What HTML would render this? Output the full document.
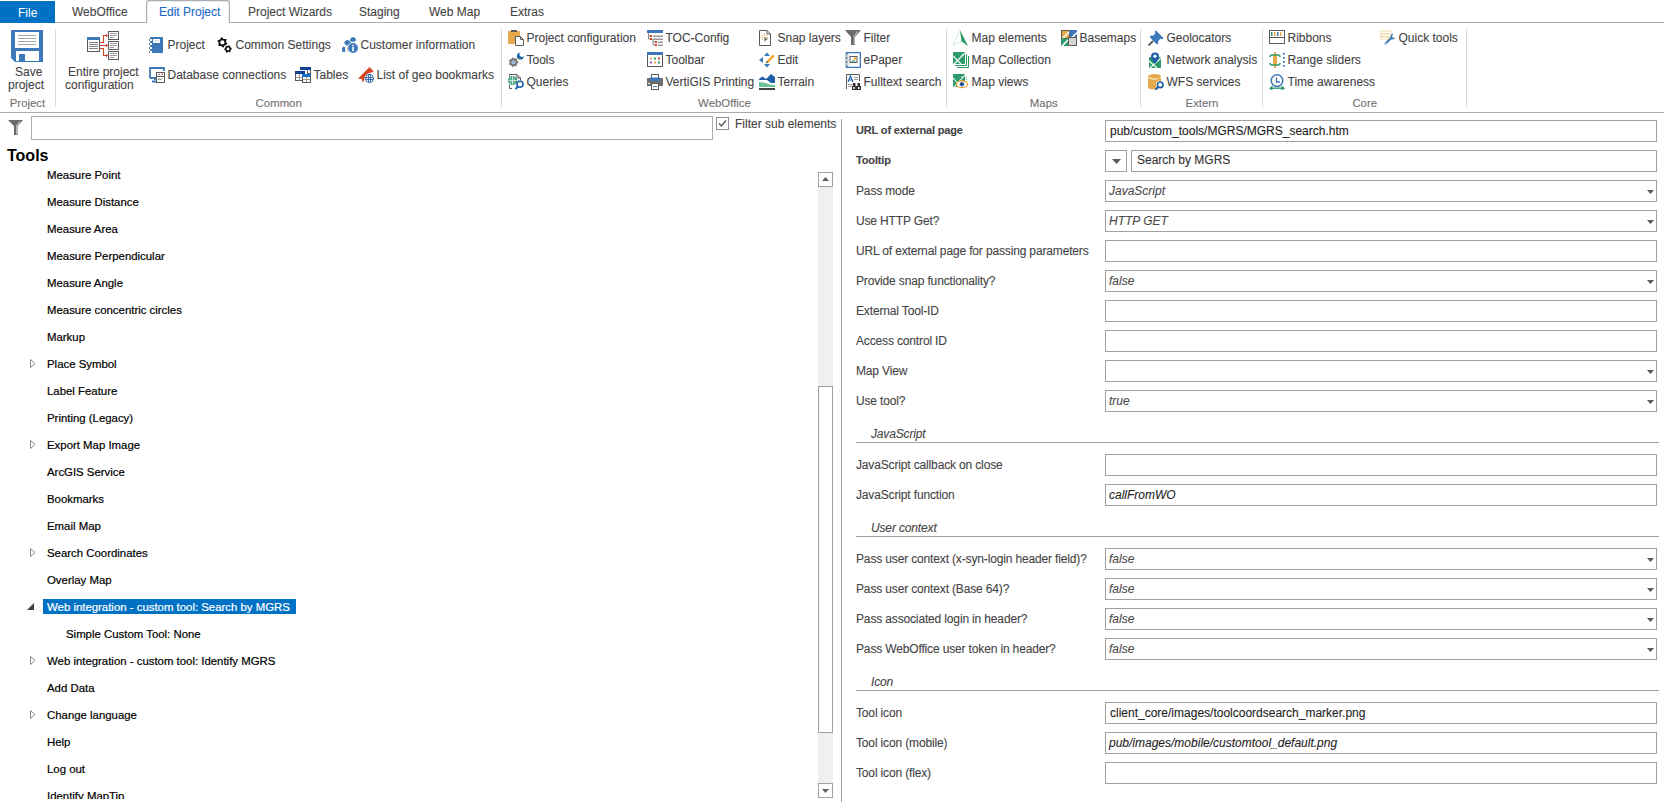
<!DOCTYPE html>
<html><head><meta charset="utf-8"><style>
html,body{margin:0;padding:0;background:#fff;}
body{width:1664px;height:810px;position:relative;overflow:hidden;font-family:"Liberation Sans",sans-serif;font-size:12px;}
.t{position:absolute;white-space:nowrap;line-height:15px;color:#444;}
.rb{color:#444;-webkit-text-stroke-width:0.1px;}
.tr{color:#000;font-size:11.4px;-webkit-text-stroke-width:0.2px;}
.pl{color:#444;letter-spacing:-0.15px;-webkit-text-stroke-width:0.1px;}
.pv{color:#1e1e1e;-webkit-text-stroke-width:0.1px;}
svg{display:block}
</style></head><body>
<div style="position:absolute;left:0px;top:1px;width:55px;height:22px;background:#0072c6"></div>
<div class="t " style="left:18px;top:6px;color:#fff">File</div>
<div style="position:absolute;left:55px;top:22px;width:1609px;height:1px;background:#ababab"></div>
<div style="position:absolute;left:146px;top:0;width:84px;height:23px;border:1px solid #ababab;border-bottom:none;border-radius:3px 3px 0 0;background:#fff;box-sizing:border-box;box-shadow:inset 1px 1px 0 #e4f1fb,inset -1px 0 0 #e4f1fb"></div>
<div class="t rb" style="left:72px;top:5px;">WebOffice</div>
<div class="t rb" style="left:248px;top:5px;">Project Wizards</div>
<div class="t rb" style="left:359px;top:5px;">Staging</div>
<div class="t rb" style="left:429px;top:5px;">Web Map</div>
<div class="t rb" style="left:510px;top:5px;">Extras</div>
<div class="t rb" style="left:159px;top:5px;color:#1a6ac8">Edit Project</div>
<div style="position:absolute;left:0px;top:112px;width:1664px;height:1px;background:#ababab"></div>
<div style="position:absolute;left:55px;top:29px;width:1px;height:78px;background:#dadada"></div>
<div style="position:absolute;left:501px;top:29px;width:1px;height:78px;background:#dadada"></div>
<div style="position:absolute;left:946px;top:29px;width:1px;height:78px;background:#dadada"></div>
<div style="position:absolute;left:1140px;top:29px;width:1px;height:78px;background:#dadada"></div>
<div style="position:absolute;left:1262px;top:29px;width:1px;height:78px;background:#dadada"></div>
<div style="position:absolute;left:1466px;top:29px;width:1px;height:78px;background:#dadada"></div>
<div class="t rb" style="left:-22.5px;width:100px;text-align:center;top:96px;font-size:11.4px;color:#707070">Project</div>
<div class="t rb" style="left:228.7px;width:100px;text-align:center;top:96px;font-size:11.4px;color:#707070">Common</div>
<div class="t rb" style="left:674.5px;width:100px;text-align:center;top:96px;font-size:11.4px;color:#707070">WebOffice</div>
<div class="t rb" style="left:993.75px;width:100px;text-align:center;top:96px;font-size:11.4px;color:#707070">Maps</div>
<div class="t rb" style="left:1152px;width:100px;text-align:center;top:96px;font-size:11.4px;color:#707070">Extern</div>
<div class="t rb" style="left:1314.75px;width:100px;text-align:center;top:96px;font-size:11.4px;color:#707070">Core</div>
<div style="position:absolute;left:11px;top:30px"><svg width="32" height="32" viewBox="0 0 32 32" shape-rendering="geometricPrecision"><path d="M0 0H32V32H4L0 28Z" fill="#3d78b8"/><rect x="4" y="2" width="24" height="16" fill="#fff"/><rect x="7" y="5" width="18" height="1" fill="#a8a8a8"/><rect x="7" y="8" width="18" height="1" fill="#a8a8a8"/><rect x="7" y="11" width="18" height="1" fill="#a8a8a8"/><rect x="7" y="14" width="18" height="1" fill="#a8a8a8"/><rect x="5" y="21" width="23" height="10" fill="#fff"/><rect x="8" y="24" width="6" height="8" fill="#3d78b8"/></svg></div>
<div class="t rb" style="left:15px;top:65px;">Save</div>
<div class="t rb" style="left:8px;top:78px;">project</div>
<div style="position:absolute;left:87px;top:31px"><svg width="32" height="30" viewBox="0 0 32 30" shape-rendering="geometricPrecision"><rect x="0.5" y="6.5" width="12" height="14" fill="#fff" stroke="#5a5a5a"/><rect x="0" y="6" width="13" height="3" fill="#3d78b8"/><rect x="2" y="11" width="9" height="1" fill="#888"/><rect x="2" y="13" width="9" height="1" fill="#888"/><rect x="2" y="15" width="9" height="1" fill="#888"/><rect x="2" y="17" width="9" height="1" fill="#888"/><path d="M13 11.5H16.5V4.5H20.5M13 14.5H20.5M13 17.5H16.5V24.5H20.5" fill="none" stroke="#d24726" stroke-width="1.1"/><path d="M19.5 3L21 4.5L19.5 6L18 4.5ZM19.5 13L21 14.5L19.5 16L18 14.5ZM19.5 23L21 24.5L19.5 26L18 24.5Z" fill="#d24726"/><rect x="21.5" y="0.5" width="10" height="8" fill="#fff" stroke="#5a5a5a"/><rect x="23" y="2" width="7" height="1" fill="#999"/><rect x="23" y="4" width="7" height="1" fill="#999"/><rect x="23" y="6" width="4" height="1" fill="#999"/><rect x="21.5" y="10.5" width="10" height="8" fill="#fff" stroke="#5a5a5a"/><rect x="23" y="12" width="7" height="1" fill="#999"/><rect x="23" y="14" width="7" height="1" fill="#999"/><rect x="23" y="16" width="4" height="1" fill="#999"/><rect x="21.5" y="20.5" width="10" height="8" fill="#fff" stroke="#5a5a5a"/><rect x="23" y="22" width="7" height="1" fill="#999"/><rect x="23" y="24" width="7" height="1" fill="#999"/><rect x="23" y="26" width="4" height="1" fill="#999"/></svg></div>
<div class="t rb" style="left:68px;top:65px;">Entire project</div>
<div class="t rb" style="left:65px;top:78px;">configuration</div>
<div style="position:absolute;left:149px;top:37px;width:16px;height:16px"><svg width="16" height="16" viewBox="0 0 16 16" shape-rendering="geometricPrecision"><rect x="1" y="0" width="13" height="16" fill="#3d78b8"/><rect x="4" y="2" width="7" height="4" fill="#fff"/><rect x="5" y="3" width="5" height="2" fill="#dde8f3"/><rect x="0" y="2" width="3" height="2" fill="#fff"/><rect x="0" y="2" width="1" height="2" fill="#777"/><rect x="0" y="6" width="3" height="2" fill="#fff"/><rect x="0" y="6" width="1" height="2" fill="#777"/><rect x="0" y="10" width="3" height="2" fill="#fff"/><rect x="0" y="10" width="1" height="2" fill="#777"/><rect x="0" y="14" width="3" height="2" fill="#fff"/><rect x="0" y="14" width="1" height="2" fill="#777"/></svg></div>
<div class="t rb" style="left:167.5px;top:38px;">Project</div>
<div style="position:absolute;left:217px;top:37px;width:16px;height:16px"><svg width="16" height="16" viewBox="0 0 16 16" shape-rendering="geometricPrecision"><polygon points="4.46,0.08 6.67,1.92 9.54,1.93 9.04,4.76 10.47,7.25 7.78,8.23 6.34,10.72 4.13,8.88 1.26,8.87 1.76,6.04 0.33,3.55 3.02,2.57" fill="#111"/><circle cx="5.4" cy="5.4" r="3.4000000000000004" fill="#111"/><circle cx="5.4" cy="5.4" r="2.1" fill="#fff"/><polygon points="12.69,8.37 13.38,10.34 14.98,11.65 13.63,13.23 13.29,15.28 11.25,14.89 9.31,15.63 8.62,13.66 7.02,12.35 8.37,10.77 8.71,8.72 10.75,9.11" fill="#111"/><circle cx="11" cy="12" r="2.6" fill="#111"/><circle cx="11" cy="12" r="1.4" fill="#fff"/></svg></div>
<div class="t rb" style="left:235.5px;top:38px;">Common Settings</div>
<div style="position:absolute;left:342px;top:37px;width:16px;height:16px"><svg width="16" height="16" viewBox="0 0 16 16" shape-rendering="geometricPrecision"><path d="M8.5 1.5Q9.5 0 11 0Q12.5 0 13.5 1.5L14 3.5L12.5 4.7H9.5L8 3.5Z" fill="#3d78b8"/><path d="M2 5.5L4.5 3L7 3.5L9.5 6L7 8.6L4 8.5Z" fill="#3d78b8"/><path d="M0 11L1.5 9.6L3.2 10.2V15H0.3Z" fill="#3d78b8"/><circle cx="11" cy="11" r="5.8" fill="#fff"/><circle cx="11" cy="11" r="4.9" fill="#3d78b8"/><rect x="10.2" y="7.8" width="1.6" height="1.4" fill="#fff"/><rect x="10.2" y="10" width="1.6" height="4.2" fill="#fff"/><rect x="5" y="10" width="0.8" height="5" fill="#c8b8a8"/></svg></div>
<div class="t rb" style="left:360.5px;top:38px;">Customer information</div>
<div style="position:absolute;left:149px;top:67px;width:16px;height:16px"><svg width="16" height="16" viewBox="0 0 16 16" shape-rendering="geometricPrecision"><path d="M1 11V1H15V4" fill="none" stroke="#3d78b8" stroke-width="1.8"/><path d="M1 11H6V13" fill="none" stroke="#3d78b8" stroke-width="1.8"/><rect x="3" y="13.5" width="4" height="2" fill="#3d78b8"/><rect x="7.5" y="5.5" width="8" height="10" fill="#fff" stroke="#5a5a5a"/><rect x="7.5" y="9" width="8" height="1" fill="#5a5a5a"/><rect x="9" y="7" width="2" height="1" fill="#888"/><rect x="12.5" y="6.7" width="1.4" height="1.4" fill="#d24726"/><path d="M9 13L10.3 11.7L11.5 13L13 11.5" fill="none" stroke="#5a5a5a" stroke-width="0.9"/></svg></div>
<div class="t rb" style="left:167.5px;top:68px;">Database connections</div>
<div style="position:absolute;left:295px;top:67px;width:16px;height:16px"><svg width="16" height="16" viewBox="0 0 16 16" shape-rendering="geometricPrecision"><rect x="12.5" y="2.5" width="3" height="4" fill="#fff" stroke="#5a5a5a"/><rect x="5" y="0" width="11" height="3" fill="#0a3d91"/><path d="M6.5 1.5H8M9.5 1.5H11M12.5 1.5H14" stroke="#3a6ab8" stroke-width="0.8"/><rect x="0.5" y="4.5" width="7" height="9" fill="#fff" stroke="#5a5a5a"/><rect x="0" y="4" width="10" height="3" fill="#0a3d91"/><path d="M1.5 5.5H3M4.5 5.5H6" stroke="#3a6ab8" stroke-width="0.8"/><path d="M0.5 10.5H7.5M4.5 7V13.5" stroke="#999" stroke-width="1"/><rect x="7.5" y="7.5" width="8" height="8" fill="#fff" stroke="#5a5a5a"/><rect x="7" y="7" width="9" height="3" fill="#1a6ed0"/><path d="M8 12.5H15M11.5 10V15" stroke="#999" stroke-width="1"/></svg></div>
<div class="t rb" style="left:313.5px;top:68px;">Tables</div>
<div style="position:absolute;left:358px;top:67px;width:16px;height:16px"><svg width="16" height="16" viewBox="0 0 16 16" shape-rendering="geometricPrecision"><path d="M0.1 11.5L11.5 0.1L15.8 4.5L13.3 5.6Q8 6.5 6.1 13.3L4.7 15.8L3.9 12.3Z" fill="#d24726"/><circle cx="11.5" cy="11.5" r="4.9" fill="#fff"/><circle cx="11.5" cy="11.5" r="4.4" fill="#1f5fa8"/><circle cx="11.5" cy="11.5" r="3.4" fill="#fff"/><path d="M8 10.5H15M8 12.5H15M10.5 8V15M12.5 8V15" stroke="#1f5fa8" stroke-width="0.9"/></svg></div>
<div class="t rb" style="left:376.5px;top:68px;">List of geo bookmarks</div>
<div style="position:absolute;left:508px;top:30px;width:16px;height:16px"><svg width="16" height="16" viewBox="0 0 16 16" shape-rendering="geometricPrecision"><rect x="0" y="1" width="12" height="13" fill="#e8a94c"/><rect x="3" y="0" width="6" height="2" fill="#5a5a5a"/><path d="M7.5 6.5H12.5L15.5 9.5V15.5H7.5Z" fill="#fff" stroke="#5a5a5a"/><path d="M12.5 6.5V9.5H15.5" fill="none" stroke="#5a5a5a"/></svg></div>
<div class="t rb" style="left:526.5px;top:31px;">Project configuration</div>
<div style="position:absolute;left:508px;top:52px;width:16px;height:16px"><svg width="16" height="16" viewBox="0 0 16 16" shape-rendering="geometricPrecision"><polygon points="10.70,10.20 8.92,11.85 8.74,14.27 6.35,13.90 4.34,15.27 3.13,13.17 0.81,12.46 1.70,10.20 0.81,7.94 3.13,7.23 4.34,5.13 6.35,6.50 8.74,6.13 8.92,8.55" fill="#7a7a7a"/><circle cx="5.5" cy="10.2" r="3.5" fill="#7a7a7a"/><circle cx="5.5" cy="10.2" r="1.8" fill="#fff"/><circle cx="5.5" cy="10.2" r="1.5" fill="#8ab0e0"/><circle cx="12.3" cy="4.2" r="3.4" fill="#1f5fa8"/><circle cx="13.8" cy="2.6" r="2.4" fill="#fff"/><circle cx="10.8" cy="7.3" r="0.8" fill="#b8e060"/></svg></div>
<div class="t rb" style="left:526.5px;top:53px;">Tools</div>
<div style="position:absolute;left:508px;top:74px;width:16px;height:16px"><svg width="16" height="16" viewBox="0 0 16 16" shape-rendering="geometricPrecision"><path d="M1.5 11V14.5H4M1.5 2.5V0.5H9L12.5 4V6.5M9 0.5V4H12.5" fill="none" stroke="#5a5a5a"/><circle cx="4.6" cy="6.6" r="4.6" fill="#2e9a6a"/><path d="M0.5 6.6H8.7M4.6 2.2V11" stroke="#fff" stroke-width="0.8"/><path d="M1.5 4.6H7.7M1.5 8.6H7.7M2.6 2.8V10.4M6.6 2.8V10.4" stroke="#fff" stroke-width="0.6" stroke-dasharray="1 1"/><circle cx="12" cy="10.2" r="3" fill="#fff" stroke="#1f5fa8" stroke-width="1.6"/><path d="M9.9 12.3L7.6 15.2" stroke="#1f5fa8" stroke-width="2"/></svg></div>
<div class="t rb" style="left:526.5px;top:75px;">Queries</div>
<div style="position:absolute;left:647px;top:30px;width:16px;height:16px"><svg width="16" height="16" viewBox="0 0 16 16" shape-rendering="geometricPrecision"><rect x="0" y="0" width="16" height="3" fill="#3d78b8"/><path d="M1.5 3V9H3M1.5 6H3M6 9V15H8M6 12H8" fill="none" stroke="#888" stroke-width="1"/><rect x="3" y="5" width="2" height="2" fill="#d24726"/><rect x="3" y="8" width="2" height="2" fill="#d24726"/><rect x="8" y="11" width="2" height="2" fill="#d24726"/><rect x="8" y="14" width="2" height="2" fill="#d24726"/><rect x="6" y="5.5" width="10" height="1.5" fill="#999"/><rect x="6" y="8.5" width="10" height="1.5" fill="#999"/><rect x="11" y="11.5" width="5" height="1.5" fill="#999"/><rect x="11" y="14.5" width="5" height="1.5" fill="#999"/></svg></div>
<div class="t rb" style="left:665.5px;top:31px;">TOC-Config</div>
<div style="position:absolute;left:647px;top:52px;width:16px;height:16px"><svg width="16" height="16" viewBox="0 0 16 16" shape-rendering="geometricPrecision"><rect x="0.5" y="0.5" width="15" height="14" fill="#fff" stroke="#5a5a5a"/><rect x="0" y="0" width="16" height="3" fill="#3d78b8"/><rect x="3" y="5.5" width="2" height="2" fill="#e8a94c"/><rect x="7" y="5.5" width="2" height="2" fill="#2e9a6a"/><rect x="11" y="5.5" width="2" height="2" fill="#d24726"/><rect x="3" y="9.5" width="2" height="2" fill="#9b59b6"/><rect x="7" y="9.5" width="2" height="2" fill="#e8a94c"/><rect x="11" y="9.5" width="2" height="2" fill="#2e9a6a"/></svg></div>
<div class="t rb" style="left:665.5px;top:53px;">Toolbar</div>
<div style="position:absolute;left:647px;top:74px;width:16px;height:16px"><svg width="16" height="16" viewBox="0 0 16 16" shape-rendering="geometricPrecision"><rect x="4.5" y="0.5" width="7" height="4" fill="#fff" stroke="#5a5a5a"/><rect x="0" y="4" width="16" height="8" fill="#6e6e6e"/><rect x="3" y="3.5" width="10" height="3.5" fill="#3d78b8"/><rect x="1" y="9" width="2" height="1" fill="#fff"/><rect x="4.5" y="9.5" width="7" height="6" fill="#fff" stroke="#5a5a5a"/><rect x="6" y="12" width="4" height="1" fill="#3d78b8"/></svg></div>
<div class="t rb" style="left:665.5px;top:75px;">VertiGIS Printing</div>
<div style="position:absolute;left:759px;top:30px;width:16px;height:16px"><svg width="16" height="16" viewBox="0 0 16 16" shape-rendering="geometricPrecision"><path d="M0.5 0.5H8L11.5 4V15.5H0.5Z" fill="#fff" stroke="#5a5a5a"/><path d="M8 0.5V4H11.5" fill="none" stroke="#5a5a5a"/><path d="M5.5 3.5V5.3M5.5 9.7V11.5M1.8 7.5H3.6M7.4 7.5H9.2M3 5L4 6M8 5L7 6M3 10L4 9" stroke="#e8a94c" stroke-width="0.9"/><path d="M5 6.5L9 9.5L7 9.8L6 12Z" fill="#666"/></svg></div>
<div class="t rb" style="left:777.5px;top:31px;">Snap layers</div>
<div style="position:absolute;left:759px;top:52px;width:16px;height:16px"><svg width="16" height="16" viewBox="0 0 16 16" shape-rendering="geometricPrecision"><path d="M5 4L8 0.5L11 4Z M5 12L8 15.5L11 12Z M4 5L0 8L4 11Z" fill="#3d78b8"/><path d="M14 2.5L15.8 4.3L9.5 10.6L7.2 11.3L7.8 9Z" fill="#f5a623"/><path d="M7.8 9L9.5 10.6L7 11.5Z" fill="#555"/></svg></div>
<div class="t rb" style="left:777.5px;top:53px;">Edit</div>
<div style="position:absolute;left:759px;top:74px;width:16px;height:16px"><svg width="16" height="16" viewBox="0 0 16 16" shape-rendering="geometricPrecision"><path d="M0 5L3.5 2.5L7 5L12 0L16 3V9L12 9L8 6L0 6Z" fill="#1f5fa8"/><path d="M0 8Q5 8 8 9.5T16 11V13H0Z" fill="#6fbf9a"/><rect x="0" y="14" width="16" height="2" fill="#444"/></svg></div>
<div class="t rb" style="left:777.5px;top:75px;">Terrain</div>
<div style="position:absolute;left:845px;top:30px;width:16px;height:16px"><svg width="16" height="16" viewBox="0 0 16 16" shape-rendering="geometricPrecision"><path d="M0 0H16L10 7V15H6V7Z" fill="#6a6a6a"/><path d="M13 1.5L9.5 6.5V14H8.8V6.5L12 1.5Z" fill="#fff" opacity="0.9"/></svg></div>
<div class="t rb" style="left:863.5px;top:31px;">Filter</div>
<div style="position:absolute;left:845px;top:52px;width:16px;height:16px"><svg width="16" height="16" viewBox="0 0 16 16" shape-rendering="geometricPrecision"><rect x="1.5" y="0.5" width="14" height="15" fill="#fff" stroke="#3d78b8" stroke-width="1.6"/><rect x="0" y="3" width="3" height="2" fill="#fff" stroke="#888" stroke-width="0.6"/><rect x="0" y="7" width="3" height="2" fill="#fff" stroke="#888" stroke-width="0.6"/><rect x="0" y="11" width="3" height="2" fill="#fff" stroke="#888" stroke-width="0.6"/><rect x="5" y="4.5" width="7" height="6" fill="#fff" stroke="#5a5a5a"/><path d="M6 9.5Q8 7 11 9.5Z" fill="#2e9a6a"/><circle cx="10" cy="6.5" r="1.2" fill="#f5a623"/></svg></div>
<div class="t rb" style="left:863.5px;top:53px;">ePaper</div>
<div style="position:absolute;left:845px;top:74px;width:16px;height:16px"><svg width="16" height="16" viewBox="0 0 16 16" shape-rendering="geometricPrecision"><path d="M1.5 15V0.5H14.5V7" fill="none" stroke="#5a5a5a"/><path d="M3 8L5.5 2L8 8M4 6H7" fill="none" stroke="#1f5fa8" stroke-width="1.2"/><rect x="9" y="3" width="4" height="1" fill="#999"/><rect x="9" y="5" width="4" height="1" fill="#999"/><rect x="3" y="10" width="5" height="1" fill="#999"/><rect x="3" y="12" width="4" height="1" fill="#999"/><path d="M7 12H16V16H7Z M8 9H10.5V12H8Z M12.5 9H15V12H12.5Z" fill="#333"/><rect x="8.2" y="13" width="1.5" height="2" fill="#fff"/><rect x="13" y="13" width="1.5" height="2" fill="#fff"/></svg></div>
<div class="t rb" style="left:863.5px;top:75px;">Fulltext search</div>
<div style="position:absolute;left:953px;top:30px;width:16px;height:16px"><svg width="16" height="16" viewBox="0 0 16 16" shape-rendering="geometricPrecision"><path d="M7 0L15 16L8.5 11.5Z" fill="#2e9a6a"/><path d="M7 0L0 15L8.5 11.5" fill="none" stroke="#2e9a6a" stroke-width="0.7" stroke-dasharray="1 1" opacity="0.6"/></svg></div>
<div class="t rb" style="left:971.5px;top:31px;">Map elements</div>
<div style="position:absolute;left:953px;top:52px;width:16px;height:16px"><svg width="16" height="16" viewBox="0 0 16 16" shape-rendering="geometricPrecision"><rect x="0" y="0" width="12" height="12" rx="0.8" fill="#2e9a6a"/><path d="M0 4L8 12M1 12L12 1" stroke="#fff" stroke-width="1.1"/><circle cx="9" cy="3" r="0.7" fill="#fff"/><path d="M2 13.5H13.5V2.5M4 15.5H15.5V4" fill="none" stroke="#2e9a6a" stroke-width="1"/></svg></div>
<div class="t rb" style="left:971.5px;top:53px;">Map Collection</div>
<div style="position:absolute;left:953px;top:74px;width:16px;height:16px"><svg width="16" height="16" viewBox="0 0 16 16" shape-rendering="geometricPrecision"><rect x="0" y="0" width="12" height="13" rx="0.8" fill="#2e9a6a"/><path d="M0 4L8 13M1 13L12 1" stroke="#fff" stroke-width="1.1"/><circle cx="9" cy="3" r="0.7" fill="#fff"/><path d="M13.5 3V14" stroke="#2e9a6a" stroke-dasharray="1 1.2" opacity="0.7"/><ellipse cx="9" cy="10.3" rx="5.6" ry="3.4" fill="#fff" stroke="#f0a030" stroke-width="1.2"/><circle cx="9" cy="10.3" r="2.4" fill="#3a80d0"/><circle cx="8.6" cy="9.9" r="1" fill="#111"/></svg></div>
<div class="t rb" style="left:971.5px;top:75px;">Map views</div>
<div style="position:absolute;left:1061px;top:30px;width:16px;height:16px"><svg width="16" height="16" viewBox="0 0 16 16" shape-rendering="geometricPrecision"><rect x="0.5" y="0.5" width="8" height="8" fill="#e8a94c" stroke="#5a5a5a"/><path d="M2 8L8 2" stroke="#fff" stroke-width="1.6"/><path d="M8.5 0H16V8.5H8.5Z" fill="#3d78b8"/><path d="M10 8.5L16 2.5" stroke="#fff" stroke-width="1.6"/><path d="M0 8.5H8V16H0Z" fill="#2e9a6a"/><path d="M1 16L8 9" stroke="#fff" stroke-width="1.6"/><rect x="7.5" y="7.5" width="8" height="8" fill="#d4d4d4" stroke="#5a5a5a"/></svg></div>
<div class="t rb" style="left:1079.5px;top:31px;">Basemaps</div>
<div style="position:absolute;left:1148px;top:30px;width:16px;height:16px"><svg width="16" height="16" viewBox="0 0 16 16" shape-rendering="geometricPrecision"><path d="M8 0.5L15.5 8L14 9.5L12.5 8.5L10 11.5L10.5 13L9 14.5L1.5 7L3 5.5L4.5 6L7.5 3.5L6.5 2Z" fill="#3d78b8"/><path d="M5 11L0.5 15.5" stroke="#555" stroke-width="1.8"/></svg></div>
<div class="t rb" style="left:1166.5px;top:31px;">Geolocators</div>
<div style="position:absolute;left:1148px;top:52px;width:16px;height:16px"><svg width="16" height="16" viewBox="0 0 16 16" shape-rendering="geometricPrecision"><rect x="1" y="5" width="12" height="11" rx="0.8" fill="#2e9a6a"/><path d="M1 9L9 16M2 16L13 6" stroke="#fff" stroke-width="1.1"/><circle cx="10" cy="8" r="0.7" fill="#fff"/><path d="M7 0.5Q11 0.5 11 4.5Q11 7 7 12Q3 7 3 4.5Q3 0.5 7 0.5Z" fill="#1f5fa8"/><circle cx="7" cy="4.2" r="1.6" fill="#fff"/></svg></div>
<div class="t rb" style="left:1166.5px;top:53px;">Network analysis</div>
<div style="position:absolute;left:1148px;top:74px;width:16px;height:16px"><svg width="16" height="16" viewBox="0 0 16 16" shape-rendering="geometricPrecision"><path d="M0 2.5V13Q0 15.5 6.5 15.5Q9 15.5 10 15V2.5Z" fill="#e8a94c"/><ellipse cx="6.5" cy="2.5" rx="6.5" ry="2.5" fill="#e8a94c"/><path d="M0 3.8Q6.5 6.8 13 3.8" stroke="#fff" stroke-width="0.9" fill="none"/><rect x="10" y="4" width="3" height="3" fill="#e8a94c"/><circle cx="12" cy="11" r="4.2" fill="#fff"/><circle cx="12.2" cy="10.8" r="2.8" fill="none" stroke="#1f5fa8" stroke-width="1.7"/><path d="M10 13L7.5 15.8" stroke="#1f5fa8" stroke-width="2"/></svg></div>
<div class="t rb" style="left:1166.5px;top:75px;">WFS services</div>
<div style="position:absolute;left:1269px;top:30px;width:16px;height:16px"><svg width="16" height="16" viewBox="0 0 16 16" shape-rendering="geometricPrecision"><rect x="0.5" y="0.5" width="15" height="13" fill="#fff" stroke="#5a5a5a"/><path d="M0.5 7.5H15.5" stroke="#5a5a5a"/><rect x="2" y="2" width="1.5" height="4" fill="#2e9a6a"/><rect x="5" y="2" width="1.5" height="4" fill="#e8a94c"/><rect x="8" y="2" width="1.5" height="4" fill="#3d78b8"/><rect x="11" y="2" width="1.5" height="4" fill="#e8a94c"/></svg></div>
<div class="t rb" style="left:1287.5px;top:31px;">Ribbons</div>
<div style="position:absolute;left:1269px;top:52px;width:16px;height:16px"><svg width="16" height="16" viewBox="0 0 16 16" shape-rendering="geometricPrecision"><rect x="5" y="0" width="2" height="16" fill="#e8a94c"/><rect x="4" y="3" width="4" height="10" fill="#e8a94c"/><path d="M1 5Q1 3 3 3H9Q11 3 11 5M1 11Q1 13 3 13H9Q11 13 11 11" fill="none" stroke="#2e9a6a" stroke-width="1.5"/><rect x="14" y="1" width="1.6" height="1.6" fill="#1f5fa8"/><rect x="14" y="5" width="1.6" height="1.6" fill="#1f5fa8"/><rect x="14" y="9" width="1.6" height="1.6" fill="#1f5fa8"/><rect x="14" y="13" width="1.6" height="1.6" fill="#1f5fa8"/></svg></div>
<div class="t rb" style="left:1287.5px;top:53px;">Range sliders</div>
<div style="position:absolute;left:1269px;top:74px;width:16px;height:16px"><svg width="16" height="16" viewBox="0 0 16 16" shape-rendering="geometricPrecision"><circle cx="8" cy="6.6" r="5.8" fill="#fff" stroke="#3d78b8" stroke-width="1.5"/><path d="M7.5 3.5V8H11" fill="none" stroke="#3d78b8" stroke-width="1.3"/><path d="M2 14.2H14" stroke="#2e9a6a" stroke-width="1.4"/><path d="M0 14.2L3.5 11.5V17Z M16 14.2L12.5 11.5V17Z" fill="#2e9a6a"/></svg></div>
<div class="t rb" style="left:1287.5px;top:75px;">Time awareness</div>
<div style="position:absolute;left:1380px;top:30px;width:16px;height:16px"><svg width="16" height="16" viewBox="0 0 16 16" shape-rendering="geometricPrecision"><rect x="0.5" y="0.5" width="11" height="9" fill="#f3d9a8"/><rect x="1.5" y="1.5" width="10" height="1.6" fill="#fff"/><rect x="1.5" y="4.5" width="10" height="1.6" fill="#fff"/><rect x="1.5" y="7.5" width="6" height="1.4" fill="#fff"/><path d="M13.2 3.5Q10 4 10.5 7.5L5 12.5Q4 14.5 6 14.5L11.3 9.5Q14.5 10 15.5 7.5L13.5 8.3L12 6.5Z" fill="#3d78b8"/><circle cx="6.2" cy="13.2" r="0.6" fill="#fff"/></svg></div>
<div class="t rb" style="left:1398.5px;top:31px;">Quick tools</div>
<div style="position:absolute;left:8px;top:120px"><svg width="16" height="15" viewBox="0 0 16 15" shape-rendering="geometricPrecision"><path d="M0 0H15L9.5 6V15H6V6Z" fill="#6a6a6a"/><path d="M12.5 1.2L8.8 5.8V14H8.2V5.6L11.5 1.2Z" fill="#fff" opacity="0.85"/></svg></div>
<div style="position:absolute;left:31px;top:116px;width:682px;height:24px;border:1px solid #ababab;box-sizing:border-box;background:#fff"></div>
<div style="position:absolute;left:716px;top:117px;width:13px;height:13px;border:1px solid #8f8f8f;box-sizing:border-box;background:#fff"></div>
<svg style="position:absolute;left:718px;top:119px" width="9" height="9" viewBox="0 0 9 9"><path d="M1 4.5 L3.5 7 L8 1.5" fill="none" stroke="#5a5a5a" stroke-width="1.4"/></svg>
<div class="t rb" style="left:735px;top:117px;">Filter sub elements</div>
<div class="t" style="left:7px;top:146px;font-weight:bold;font-size:16px;line-height:20px;color:#000">Tools</div>
<div style="position:absolute;left:0;top:0;width:815px;height:799px;overflow:hidden">
<div class="t tr" style="left:47px;top:168px;">Measure Point</div>
<div class="t tr" style="left:47px;top:195px;">Measure Distance</div>
<div class="t tr" style="left:47px;top:222px;">Measure Area</div>
<div class="t tr" style="left:47px;top:249px;">Measure Perpendicular</div>
<div class="t tr" style="left:47px;top:276px;">Measure Angle</div>
<div class="t tr" style="left:47px;top:303px;">Measure concentric circles</div>
<div class="t tr" style="left:47px;top:330px;">Markup</div>
<svg style="position:absolute;left:30px;top:359px" width="6" height="9" viewBox="0 0 6 9"><path d="M0.5 0.5 L5 4.5 L0.5 8.5 Z" fill="#fff" stroke="#8a8a8a" stroke-width="1"/></svg>
<div class="t tr" style="left:47px;top:357px;">Place Symbol</div>
<div class="t tr" style="left:47px;top:384px;">Label Feature</div>
<div class="t tr" style="left:47px;top:411px;">Printing (Legacy)</div>
<svg style="position:absolute;left:30px;top:440px" width="6" height="9" viewBox="0 0 6 9"><path d="M0.5 0.5 L5 4.5 L0.5 8.5 Z" fill="#fff" stroke="#8a8a8a" stroke-width="1"/></svg>
<div class="t tr" style="left:47px;top:438px;">Export Map Image</div>
<div class="t tr" style="left:47px;top:465px;">ArcGIS Service</div>
<div class="t tr" style="left:47px;top:492px;">Bookmarks</div>
<div class="t tr" style="left:47px;top:519px;">Email Map</div>
<svg style="position:absolute;left:30px;top:548px" width="6" height="9" viewBox="0 0 6 9"><path d="M0.5 0.5 L5 4.5 L0.5 8.5 Z" fill="#fff" stroke="#8a8a8a" stroke-width="1"/></svg>
<div class="t tr" style="left:47px;top:546px;">Search Coordinates</div>
<div class="t tr" style="left:47px;top:573px;">Overlay Map</div>
<div style="position:absolute;left:43px;top:599px;width:253px;height:15px;background:#0072c6"></div>
<svg style="position:absolute;left:27px;top:603px" width="7" height="7" viewBox="0 0 7 7"><path d="M0 7 L7 7 L7 0 Z" fill="#404040"/></svg>
<div class="t tr" style="left:47px;top:600px;color:#fff">Web integration - custom tool: Search by MGRS</div>
<div class="t tr" style="left:66px;top:627px;">Simple Custom Tool: None</div>
<svg style="position:absolute;left:30px;top:656px" width="6" height="9" viewBox="0 0 6 9"><path d="M0.5 0.5 L5 4.5 L0.5 8.5 Z" fill="#fff" stroke="#8a8a8a" stroke-width="1"/></svg>
<div class="t tr" style="left:47px;top:654px;">Web integration - custom tool: Identify MGRS</div>
<div class="t tr" style="left:47px;top:681px;">Add Data</div>
<svg style="position:absolute;left:30px;top:710px" width="6" height="9" viewBox="0 0 6 9"><path d="M0.5 0.5 L5 4.5 L0.5 8.5 Z" fill="#fff" stroke="#8a8a8a" stroke-width="1"/></svg>
<div class="t tr" style="left:47px;top:708px;">Change language</div>
<div class="t tr" style="left:47px;top:735px;">Help</div>
<div class="t tr" style="left:47px;top:762px;">Log out</div>
<div class="t tr" style="left:47px;top:789px;">Identify MapTip</div>
</div>
<div style="position:absolute;left:818px;top:187px;width:15px;height:596px;background:#f0f0f0"></div>
<div style="position:absolute;left:818px;top:172px;width:15px;height:15px;border:1px solid #a0a0a0;box-sizing:border-box;background:#fff"></div>
<svg style="position:absolute;left:822px;top:177px" width="7" height="4" viewBox="0 0 7 4"><path d="M0 4 L3.5 0 L7 4Z" fill="#606060"/></svg>
<div style="position:absolute;left:818px;top:386px;width:15px;height:347px;border:1px solid #a0a0a0;box-sizing:border-box;background:#fff"></div>
<div style="position:absolute;left:818px;top:783px;width:15px;height:15px;border:1px solid #a0a0a0;box-sizing:border-box;background:#fff"></div>
<svg style="position:absolute;left:822px;top:789px" width="7" height="4" viewBox="0 0 7 4"><path d="M0 0 L3.5 4 L7 0Z" fill="#606060"/></svg>
<div style="position:absolute;left:841px;top:119px;width:1px;height:683px;background:#a0a0a0"></div>
<div class="t pl" style="left:856px;top:123px;font-weight:bold;font-size:11px;">URL of external page</div>
<div style="position:absolute;left:1105px;top:120px;width:552px;height:22px;border:1px solid #a0a0a0;box-sizing:border-box;background:#fff"></div>
<div class="t pv" style="left:1110px;top:124px;">pub/custom_tools/MGRS/MGRS_search.htm</div>
<div class="t pl" style="left:856px;top:153px;font-weight:bold;font-size:11px;">Tooltip</div>
<div style="position:absolute;left:1105px;top:150px;width:22px;height:22px;border:1px solid #a0a0a0;box-sizing:border-box;background:#fff"></div>
<svg style="position:absolute;left:1112px;top:159px" width="9" height="5" viewBox="0 0 9 5"><path d="M0 0 L4.5 5 L9 0Z" fill="#5a5a5a"/></svg>
<div style="position:absolute;left:1131px;top:150px;width:526px;height:22px;border:1px solid #a0a0a0;box-sizing:border-box;background:#fff"></div>
<div class="t pv" style="left:1137px;top:153px;color:#333">Search by MGRS</div>
<div class="t pl" style="left:856px;top:184px;">Pass mode</div>
<div style="position:absolute;left:1105px;top:180px;width:552px;height:22px;border:1px solid #a0a0a0;box-sizing:border-box;background:#fff"></div>
<div class="t pv" style="left:1109px;top:184px;font-style:italic;color:#4a4a4a;">JavaScript</div>
<svg style="position:absolute;left:1647px;top:190px" width="7" height="4" viewBox="0 0 7 4"><path d="M0 0 L3.5 4 L7 0Z" fill="#5a5a5a"/></svg>
<div class="t pl" style="left:856px;top:214px;">Use HTTP Get?</div>
<div style="position:absolute;left:1105px;top:210px;width:552px;height:22px;border:1px solid #a0a0a0;box-sizing:border-box;background:#fff"></div>
<div class="t pv" style="left:1109px;top:214px;font-style:italic;color:#4a4a4a;">HTTP GET</div>
<svg style="position:absolute;left:1647px;top:220px" width="7" height="4" viewBox="0 0 7 4"><path d="M0 0 L3.5 4 L7 0Z" fill="#5a5a5a"/></svg>
<div class="t pl" style="left:856px;top:244px;">URL of external page for passing parameters</div>
<div style="position:absolute;left:1105px;top:240px;width:552px;height:22px;border:1px solid #a0a0a0;box-sizing:border-box;background:#fff"></div>
<div class="t pl" style="left:856px;top:274px;">Provide snap functionality?</div>
<div style="position:absolute;left:1105px;top:270px;width:552px;height:22px;border:1px solid #a0a0a0;box-sizing:border-box;background:#fff"></div>
<div class="t pv" style="left:1109px;top:274px;font-style:italic;color:#4a4a4a;">false</div>
<svg style="position:absolute;left:1647px;top:280px" width="7" height="4" viewBox="0 0 7 4"><path d="M0 0 L3.5 4 L7 0Z" fill="#5a5a5a"/></svg>
<div class="t pl" style="left:856px;top:304px;">External Tool-ID</div>
<div style="position:absolute;left:1105px;top:300px;width:552px;height:22px;border:1px solid #a0a0a0;box-sizing:border-box;background:#fff"></div>
<div class="t pl" style="left:856px;top:334px;">Access control ID</div>
<div style="position:absolute;left:1105px;top:330px;width:552px;height:22px;border:1px solid #a0a0a0;box-sizing:border-box;background:#fff"></div>
<div class="t pl" style="left:856px;top:364px;">Map View</div>
<div style="position:absolute;left:1105px;top:360px;width:552px;height:22px;border:1px solid #a0a0a0;box-sizing:border-box;background:#fff"></div>
<svg style="position:absolute;left:1647px;top:370px" width="7" height="4" viewBox="0 0 7 4"><path d="M0 0 L3.5 4 L7 0Z" fill="#5a5a5a"/></svg>
<div class="t pl" style="left:856px;top:394px;">Use tool?</div>
<div style="position:absolute;left:1105px;top:390px;width:552px;height:22px;border:1px solid #a0a0a0;box-sizing:border-box;background:#fff"></div>
<div class="t pv" style="left:1109px;top:394px;font-style:italic;color:#4a4a4a;">true</div>
<svg style="position:absolute;left:1647px;top:400px" width="7" height="4" viewBox="0 0 7 4"><path d="M0 0 L3.5 4 L7 0Z" fill="#5a5a5a"/></svg>
<div class="t pl" style="left:856px;top:458px;">JavaScript callback on close</div>
<div style="position:absolute;left:1105px;top:454px;width:552px;height:22px;border:1px solid #a0a0a0;box-sizing:border-box;background:#fff"></div>
<div class="t pl" style="left:856px;top:488px;">JavaScript function</div>
<div style="position:absolute;left:1105px;top:484px;width:552px;height:22px;border:1px solid #a0a0a0;box-sizing:border-box;background:#fff"></div>
<div class="t pv" style="left:1109px;top:488px;font-style:italic;">callFromWO</div>
<div class="t pl" style="left:856px;top:552px;">Pass user context (x-syn-login header field)?</div>
<div style="position:absolute;left:1105px;top:548px;width:552px;height:22px;border:1px solid #a0a0a0;box-sizing:border-box;background:#fff"></div>
<div class="t pv" style="left:1109px;top:552px;font-style:italic;color:#4a4a4a;">false</div>
<svg style="position:absolute;left:1647px;top:558px" width="7" height="4" viewBox="0 0 7 4"><path d="M0 0 L3.5 4 L7 0Z" fill="#5a5a5a"/></svg>
<div class="t pl" style="left:856px;top:582px;">Pass user context (Base 64)?</div>
<div style="position:absolute;left:1105px;top:578px;width:552px;height:22px;border:1px solid #a0a0a0;box-sizing:border-box;background:#fff"></div>
<div class="t pv" style="left:1109px;top:582px;font-style:italic;color:#4a4a4a;">false</div>
<svg style="position:absolute;left:1647px;top:588px" width="7" height="4" viewBox="0 0 7 4"><path d="M0 0 L3.5 4 L7 0Z" fill="#5a5a5a"/></svg>
<div class="t pl" style="left:856px;top:612px;">Pass associated login in header?</div>
<div style="position:absolute;left:1105px;top:608px;width:552px;height:22px;border:1px solid #a0a0a0;box-sizing:border-box;background:#fff"></div>
<div class="t pv" style="left:1109px;top:612px;font-style:italic;color:#4a4a4a;">false</div>
<svg style="position:absolute;left:1647px;top:618px" width="7" height="4" viewBox="0 0 7 4"><path d="M0 0 L3.5 4 L7 0Z" fill="#5a5a5a"/></svg>
<div class="t pl" style="left:856px;top:642px;">Pass WebOffice user token in header?</div>
<div style="position:absolute;left:1105px;top:638px;width:552px;height:22px;border:1px solid #a0a0a0;box-sizing:border-box;background:#fff"></div>
<div class="t pv" style="left:1109px;top:642px;font-style:italic;color:#4a4a4a;">false</div>
<svg style="position:absolute;left:1647px;top:648px" width="7" height="4" viewBox="0 0 7 4"><path d="M0 0 L3.5 4 L7 0Z" fill="#5a5a5a"/></svg>
<div class="t pl" style="left:856px;top:706px;">Tool icon</div>
<div style="position:absolute;left:1105px;top:702px;width:552px;height:22px;border:1px solid #a0a0a0;box-sizing:border-box;background:#fff"></div>
<div class="t pv" style="left:1110px;top:706px;">client_core/images/toolcoordsearch_marker.png</div>
<div class="t pl" style="left:856px;top:736px;">Tool icon (mobile)</div>
<div style="position:absolute;left:1105px;top:732px;width:552px;height:22px;border:1px solid #a0a0a0;box-sizing:border-box;background:#fff"></div>
<div class="t pv" style="left:1109px;top:736px;font-style:italic;">pub/images/mobile/customtool_default.png</div>
<div class="t pl" style="left:856px;top:766px;">Tool icon (flex)</div>
<div style="position:absolute;left:1105px;top:762px;width:552px;height:22px;border:1px solid #a0a0a0;box-sizing:border-box;background:#fff"></div>
<div class="t pl" style="left:871px;top:427px;font-style:italic">JavaScript</div>
<div style="position:absolute;left:856px;top:442px;width:803px;height:1px;background:#a0a0a0"></div>
<div class="t pl" style="left:871px;top:521px;font-style:italic">User context</div>
<div style="position:absolute;left:856px;top:536px;width:803px;height:1px;background:#a0a0a0"></div>
<div class="t pl" style="left:871px;top:675px;font-style:italic">Icon</div>
<div style="position:absolute;left:856px;top:690px;width:803px;height:1px;background:#a0a0a0"></div>
</body></html>
